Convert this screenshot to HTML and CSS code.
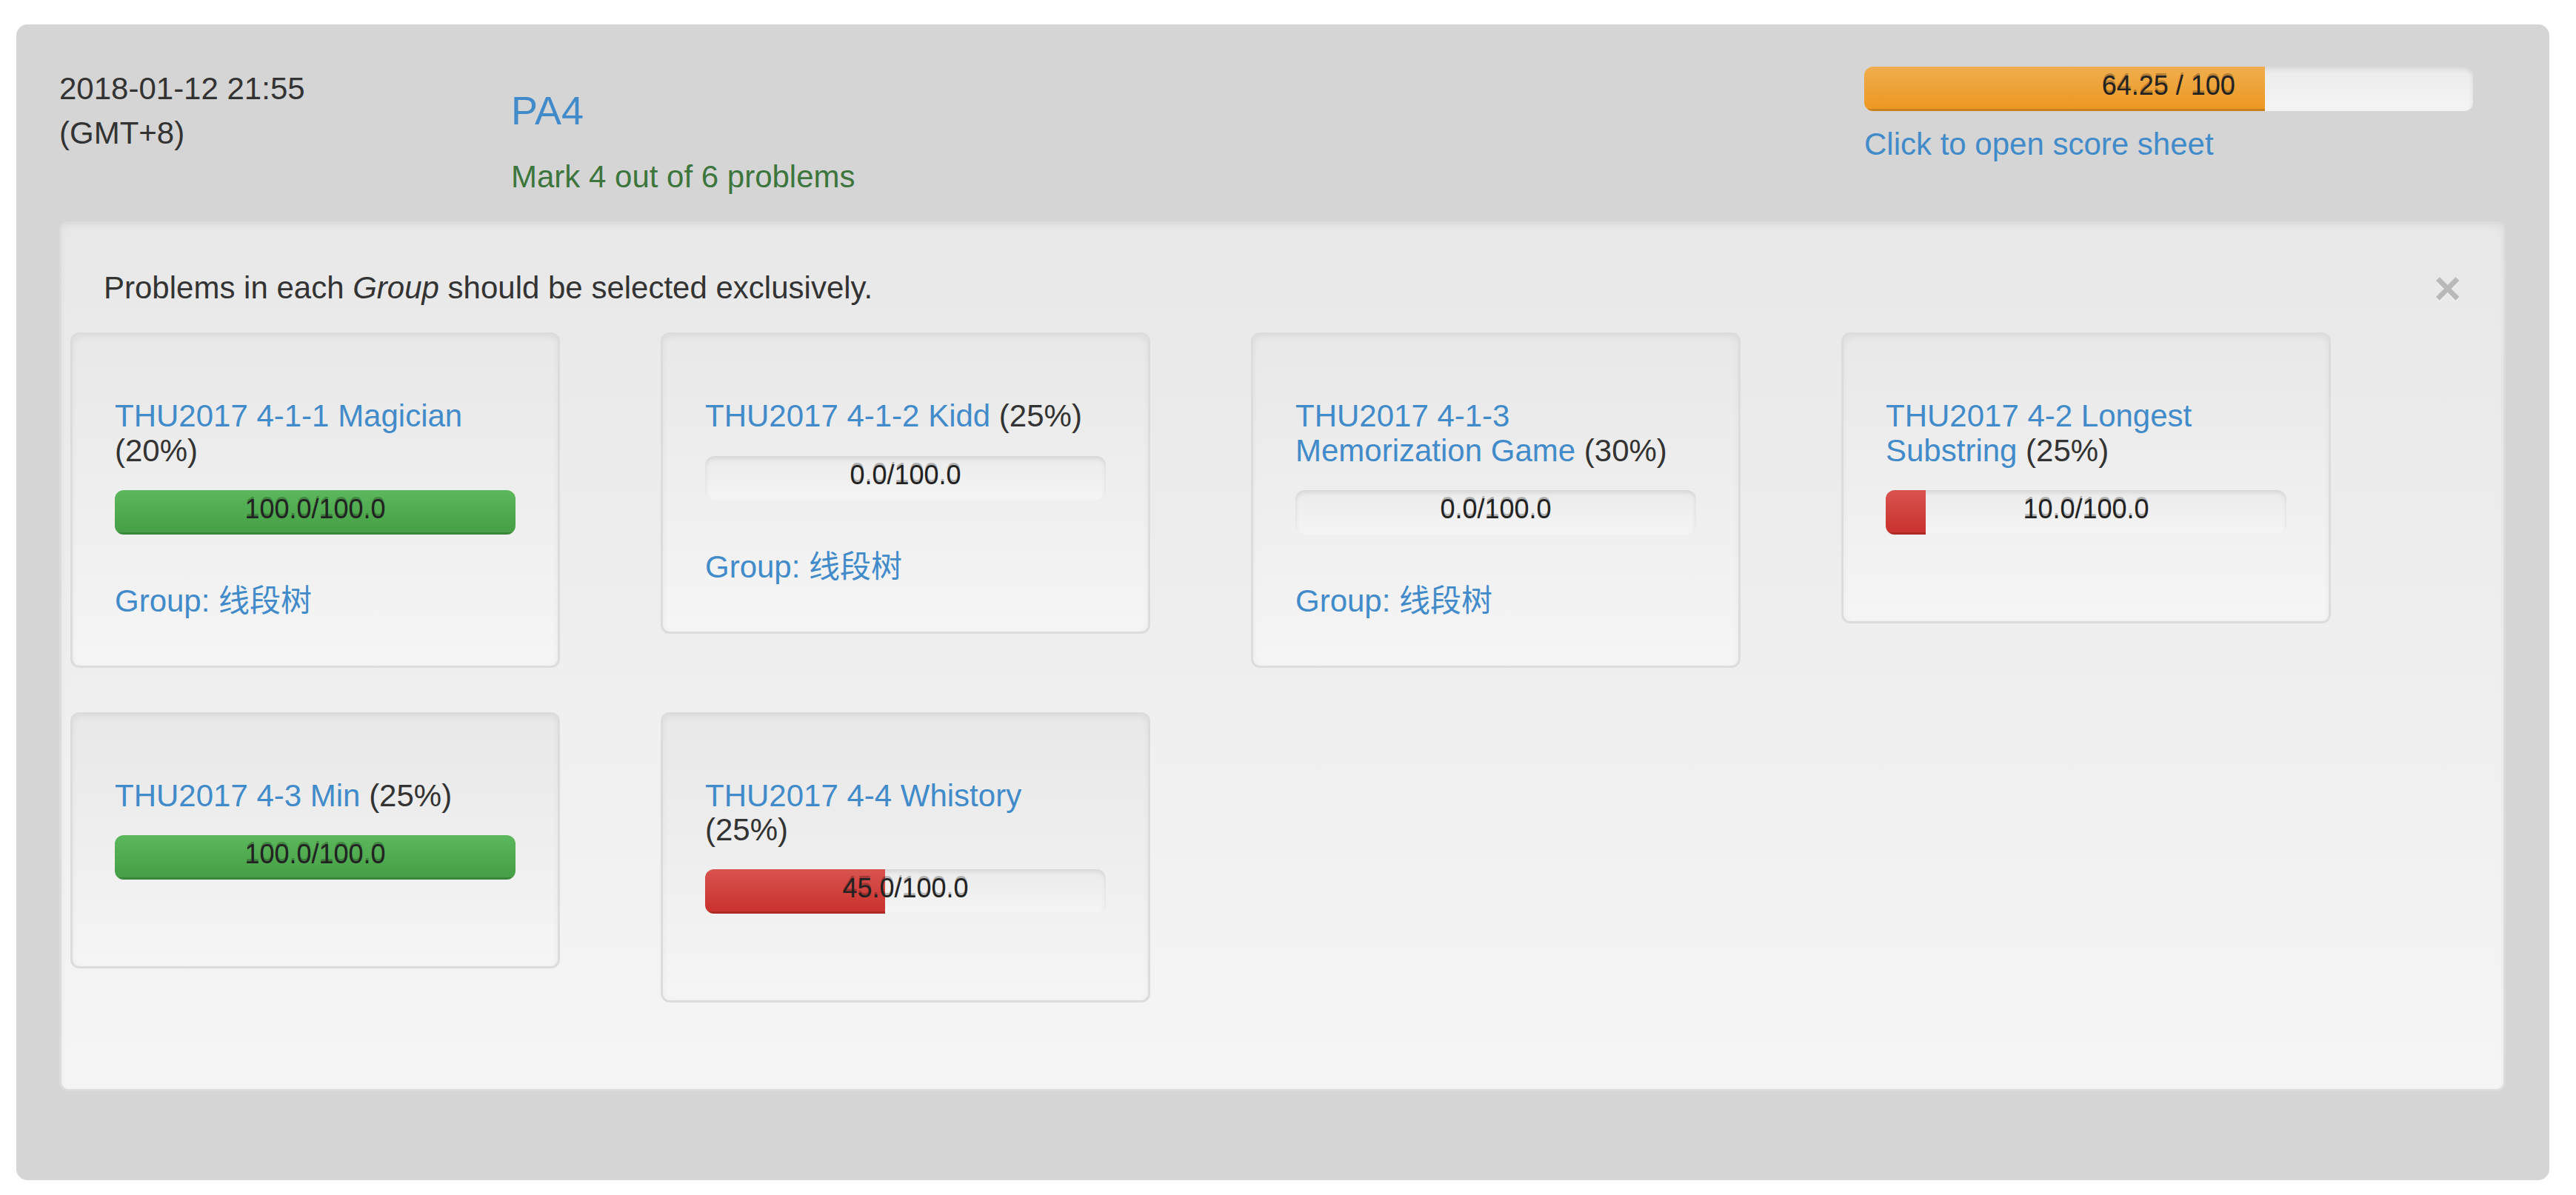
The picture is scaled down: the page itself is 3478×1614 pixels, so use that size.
FILE: index.html
```html
<!DOCTYPE html>
<html lang="en">
<head>
<meta charset="utf-8">
<title>PA4</title>
<link rel="stylesheet" href="styles.css">
</head>
<body>
<div class="panel">
  <div class="header">
    <div class="date">2018-01-12 21:55<br>(GMT+8)</div>
    <div class="title-col">
      <h4 class="pa-title"><a href="#">PA4</a></h4>
      <div class="mark">Mark 4 out of 6 problems</div>
    </div>
    <div class="score-col">
      <div class="progress progress-main">
        <div class="bar bar-warning bar-main" style="width:65.8%"><span class="bar-text">64.25 / 100</span></div>
      </div>
      <a href="#" class="sheet-link">Click to open score sheet</a>
    </div>
  </div>

  <div class="notice">
    <div class="notice-head">
      <p class="notice-text">Problems in each <em>Group</em> should be selected exclusively.</p>
      <button class="close" type="button">×</button>
    </div>
    <div class="cards">
      <div class="card">
        <h5 class="card-title"><a href="#">THU2017 4-1-1 Magician</a> (20%)</h5>
        <div class="progress">
          <div class="bar bar-success" style="width:100%"></div>
          <span class="progress-label">100.0/100.0</span>
        </div>
        <a href="#" class="group">Group: 线段树</a>
      </div>
      <div class="card">
        <h5 class="card-title"><a href="#">THU2017 4-1-2 Kidd</a> (25%)</h5>
        <div class="progress">
          <div class="bar bar-danger" style="width:0%"></div>
          <span class="progress-label">0.0/100.0</span>
        </div>
        <a href="#" class="group">Group: 线段树</a>
      </div>
      <div class="card">
        <h5 class="card-title"><a href="#">THU2017 4-1-3 Memorization Game</a> (30%)</h5>
        <div class="progress">
          <div class="bar bar-danger" style="width:0%"></div>
          <span class="progress-label">0.0/100.0</span>
        </div>
        <a href="#" class="group">Group: 线段树</a>
      </div>
      <div class="card">
        <h5 class="card-title"><a href="#">THU2017 4-2 Longest Substring</a> (25%)</h5>
        <div class="progress">
          <div class="bar bar-danger" style="width:10%"></div>
          <span class="progress-label">10.0/100.0</span>
        </div>
      </div>
      <div class="card">
        <h5 class="card-title"><a href="#">THU2017 4-3 Min</a> (25%)</h5>
        <div class="progress">
          <div class="bar bar-success" style="width:100%"></div>
          <span class="progress-label">100.0/100.0</span>
        </div>
      </div>
      <div class="card">
        <h5 class="card-title"><a href="#">THU2017 4-4 Whistory</a> (25%)</h5>
        <div class="progress">
          <div class="bar bar-danger" style="width:45%"></div>
          <span class="progress-label">45.0/100.0</span>
        </div>
      </div>
    </div>
  </div>
</div>
</body>
</html>
```

FILE: styles.css
```css
* {
  box-sizing: border-box;
}

html, body {
  margin: 0;
  padding: 0;
  background: #ffffff;
}

body {
  font-family: "Liberation Sans", Arial, "Noto Sans CJK SC", sans-serif;
  font-size: 42px;
  line-height: 60px;
  color: #333333;
}

a {
  color: #428bca;
  text-decoration: none;
}

.panel {
  margin: 33px 36px 25px 22px;
  padding: 57px 59px 60px 58px;
  background: #d5d5d5;
  border-radius: 15px;
}

/* header */
.header {
  display: grid;
  grid-template-columns: 610px 1827px 822px;
  align-items: start;
  margin-bottom: 30px;
}

.date {
  line-height: 60px;
}

.pa-title {
  margin: 30px 0;
  font-size: 54px;
  font-weight: 500;
  line-height: 1.1;
}

.mark {
  color: #3c763d;
}

.sheet-link {
  display: block;
}

/* progress bars */
.progress {
  display: grid;
  height: 60px;
  overflow: hidden;
  border-radius: 12px;
  background-color: #f5f5f5;
  background-image: linear-gradient(to bottom, #ebebeb 0, #f5f5f5 100%);
  box-shadow: inset 0 3px 6px rgba(0, 0, 0, 0.1);
  margin-bottom: 60px;
}

.progress > * {
  grid-area: 1 / 1;
}

.progress-main {
  margin-bottom: 15px;
}

.bar {
  justify-self: start;
  height: 60px;
  box-shadow: inset 0 -3px 0 rgba(0, 0, 0, 0.15);
}

.bar-success {
  background-image: linear-gradient(to bottom, #5cb85c 0, #449d44 100%);
}

.bar-danger {
  background-image: linear-gradient(to bottom, #d9534f 0, #c9302c 100%);
}

.bar-warning {
  background-image: linear-gradient(to bottom, #f0ad4e 0, #ec971f 100%);
}

.bar-main {
  display: flex;
  justify-content: flex-end;
  align-items: flex-start;
  padding-right: 40px;
}

.bar-text,
.progress-label {
  font-size: 36px;
  line-height: 52px;
  color: #222222;
  text-shadow: 0 -3px 0 rgba(0, 0, 0, 0.25);
  white-space: nowrap;
}

.progress-label {
  text-align: center;
  align-self: start;
}

/* notice box */
.notice {
  padding: 57px;
  border: 3px solid #dcdcdc;
  border-radius: 12px;
  background-color: #f5f5f5;
  background-image: linear-gradient(to bottom, #e8e8e8 0, #f5f5f5 100%);
  box-shadow: inset 0 3px 9px rgba(0, 0, 0, 0.05);
  margin-bottom: 60px;
}

.notice-head {
  display: flex;
  justify-content: space-between;
  align-items: flex-start;
  margin-bottom: 30px;
}

.notice-text {
  margin: 0;
}

.close {
  padding: 0;
  margin: 0;
  border: 0;
  background: transparent;
  font-family: "Liberation Sans", Arial, sans-serif;
  font-size: 63px;
  font-weight: bold;
  line-height: 60px;
  color: #000000;
  opacity: 0.2;
  text-shadow: 0 3px 0 #ffffff;
  cursor: pointer;
}

/* problem cards */
.cards {
  display: grid;
  grid-template-columns: repeat(4, 661px);
  column-gap: 136px;
  align-items: start;
  margin: 0 -45px;
}

.card {
  padding: 57px;
  border: 3px solid #dcdcdc;
  border-radius: 12px;
  background-color: #f5f5f5;
  background-image: linear-gradient(to bottom, #e8e8e8 0, #f5f5f5 100%);
  box-shadow: inset 0 3px 9px rgba(0, 0, 0, 0.05);
  margin-bottom: 60px;
}

.card-title {
  margin: 30px 0;
  font-size: 42px;
  font-weight: 500;
  line-height: 1.1;
}

.group {
  display: block;
  line-height: 60px;
}
```
